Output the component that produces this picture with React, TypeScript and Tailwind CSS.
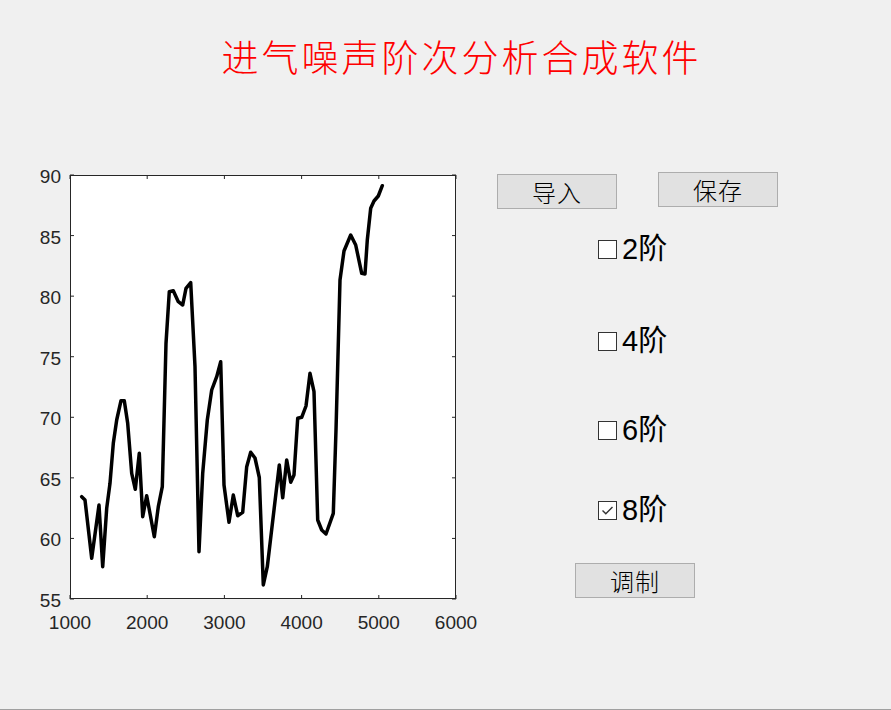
import React from "react";

const pts =
  "81.7,496.7 85,500 91.7,558.3 99,505 102.7,566.7 106.7,508.3 110,483.3 113.3,443.3 116.7,420 121,400.7 124.3,400.7 127.7,423.3 131.7,473.3 135.3,489.3 139.3,453.3 142.7,516.7 146.7,495.7 154.3,536.7 158.3,506.7 162.3,486.7 166,343.3 169.3,291.7 173.3,290.7 178.3,301.7 182.7,305 186,288.3 190.7,282.7 195,366.7 199,551.7 202.7,473.3 207.3,420 211.7,390 216.7,376.7 220.7,361.7 224,485 229,522.3 233.3,495 237.7,515.7 242.7,512.3 246.7,466.7 250.7,452.3 255,458 259.3,477.5 263.3,585 267.3,566.7 279.3,465 282.7,497.7 286.7,460 290.7,482.3 294,475 297.7,418.3 301.7,417.3 306,406 310,373.3 314,391.7 317.7,520 321.7,530 326,534 333.3,513.3 336,430 340,280 344,251 350.7,235 355.7,245 361.7,273.3 365,274 367.3,240 370.7,208.3 374,201 378.3,196 382.3,185.7";

const L = 70,
  R = 456,
  T = 175,
  B = 599;
const xv = [1000, 2000, 3000, 4000, 5000, 6000];
const yv = [55, 60, 65, 70, 75, 80, 85, 90];
const xp = (v: number) => L + ((v - 1000) / 5000) * (R - L);
const yp = (v: number) => B - ((v - 55) / 35) * (B - T);

function Chart() {
  return (
    <svg width={450} height={480} viewBox="30 160 450 480" className="shrink-0">
      <rect x={L} y={T} width={R - L} height={B - T} fill="#ffffff" />
      {xv.map((v) => (
        <g key={v}>
          <line x1={xp(v)} x2={xp(v)} y1={B} y2={B - 4} stroke="#262626" strokeWidth={1} />
          <line x1={xp(v)} x2={xp(v)} y1={T} y2={T + 4} stroke="#262626" strokeWidth={1} />
          <text
            x={xp(v)}
            y={629}
            textAnchor="middle"
            fill="#262626"
            fontSize={19}
            fontFamily="'Liberation Sans', Arial, sans-serif"
          >
            {v}
          </text>
        </g>
      ))}
      {yv.map((v) => (
        <g key={v}>
          <line x1={L} x2={L + 4} y1={yp(v)} y2={yp(v)} stroke="#262626" strokeWidth={1} />
          <line x1={R} x2={R - 4} y1={yp(v)} y2={yp(v)} stroke="#262626" strokeWidth={1} />
          <text
            x={61}
            y={yp(v) + 8}
            textAnchor="end"
            fill="#262626"
            fontSize={19}
            fontFamily="'Liberation Sans', Arial, sans-serif"
          >
            {v}
          </text>
        </g>
      ))}
      <rect x={L + 0.5} y={T + 0.5} width={R - L - 1} height={B - T - 1} fill="none" stroke="#262626" strokeWidth={1} />
      <polyline points={pts} fill="none" stroke="#000000" strokeWidth={3.5} strokeLinejoin="round" strokeLinecap="round" />
    </svg>
  );
}

function Btn({ label }: { label: string }) {
  return (
    <div className="w-[120px] h-[35px] border border-[#adadad] bg-[#e1e1e1] flex items-center justify-center text-[24px] leading-none text-black font-light tracking-[1px] font-['Noto_Sans_CJK_SC',sans-serif]">
      {label}
    </div>
  );
}

function Check({ label, checked }: { label: string; checked?: boolean }) {
  return (
    <div className="flex items-center h-[30px]">
      <div className="w-[19px] h-[19px] border border-[#333333] bg-white flex items-center justify-center">
        {checked && (
          <svg width="13" height="11" viewBox="0 0 13 11">
            <polyline points="1.5,5.5 4.8,8.8 11.5,2" fill="none" stroke="#333333" strokeWidth="1.4" />
          </svg>
        )}
      </div>
      <span className="ml-[5px] text-[29px] leading-none text-black font-['Liberation_Sans','Noto_Sans_CJK_SC',sans-serif]">
        {label}
      </span>
    </div>
  );
}

export default function App() {
  return (
    <div className="w-[891px] h-[710px] bg-[#f0f0f0] flex flex-col overflow-hidden">
      <div className="h-[160px] pt-[34px] pl-[32px] text-center text-[#ff0000] text-[37px] leading-[44px] tracking-[3px] font-light font-['Noto_Sans_CJK_SC',sans-serif]">
        进气噪声阶次分析合成软件
      </div>
      <div className="flex pl-[30px]">
        <Chart />
        <div className="ml-[17px] flex flex-col">
          <div className="flex items-start">
            <div className="mt-[14px]">
              <Btn label="导入" />
            </div>
            <div className="ml-[41px] mt-[12px]">
              <Btn label="保存" />
            </div>
          </div>
          <div className="ml-[101px] mt-[25px] flex flex-col">
            <Check label="2阶" />
            <div className="mt-[62px]">
              <Check label="4阶" />
            </div>
            <div className="mt-[59px]">
              <Check label="6阶" />
            </div>
            <div className="mt-[50px]">
              <Check label="8阶" checked />
            </div>
          </div>
          <div className="ml-[78px] mt-[38px]">
            <Btn label="调制" />
          </div>
        </div>
      </div>
      <div className="mt-auto h-px bg-[#a0a0a0]" />
    </div>
  );
}
